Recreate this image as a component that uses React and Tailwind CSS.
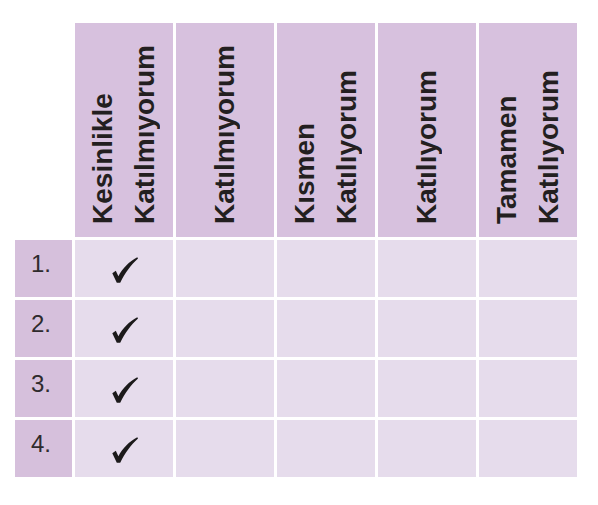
import React from "react";

const headers = [
  ["Kesinlikle", "Katılmıyorum"],
  ["Katılmıyorum"],
  ["Kısmen", "Katılıyorum"],
  ["Katılıyorum"],
  ["Tamamen", "Katılıyorum"],
];

function Check() {
  return (
    <svg width="26" height="26" viewBox="0 0 26 26" className="mt-[3px] ml-[1px]">
      <path
        d="M0.3 16.3 L3.8 13.8 L6.4 19.2 C10.5 11.5 17 4.5 25.3 0.3 L26 1.5 C19 8 13.2 15.5 8.2 25.8 L4.8 25.8 Z"
        fill="#1c1a1b"
      />
    </svg>
  );
}

export default function App() {
  return (
    <div className="w-[598px] h-[505px] bg-white pl-[15px] pt-[23px] font-['Liberation_Sans',Arial,sans-serif]">
      <div className="grid grid-cols-[57px_repeat(5,98px)] grid-rows-[214px_repeat(4,57px)] gap-[3px]">
        <div className="bg-white" />
        {headers.map((lines, i) => (
          <div
            key={i}
            className="bg-[#d7c1de] flex items-end justify-center pb-[13px]"
          >
            <div className="[writing-mode:vertical-rl] rotate-180 text-[28px] leading-[42px] font-bold text-[#231f20] whitespace-nowrap">
              {lines.map((l, j) => (
                <div key={j}>{l}</div>
              ))}
            </div>
          </div>
        ))}
        {[1, 2, 3, 4].map((n) => (
          <React.Fragment key={n}>
            <div className="bg-[#d6c0dc] flex items-center justify-center pb-[9px] pr-[5px] text-[24px] text-[#2f2b2d]">
              {n}.
            </div>
            <div className="bg-[#e6dcec] flex items-center justify-center">
              <Check />
            </div>
            <div className="bg-[#e6dcec]" />
            <div className="bg-[#e6dcec]" />
            <div className="bg-[#e6dcec]" />
            <div className="bg-[#e6dcec]" />
          </React.Fragment>
        ))}
      </div>
    </div>
  );
}
